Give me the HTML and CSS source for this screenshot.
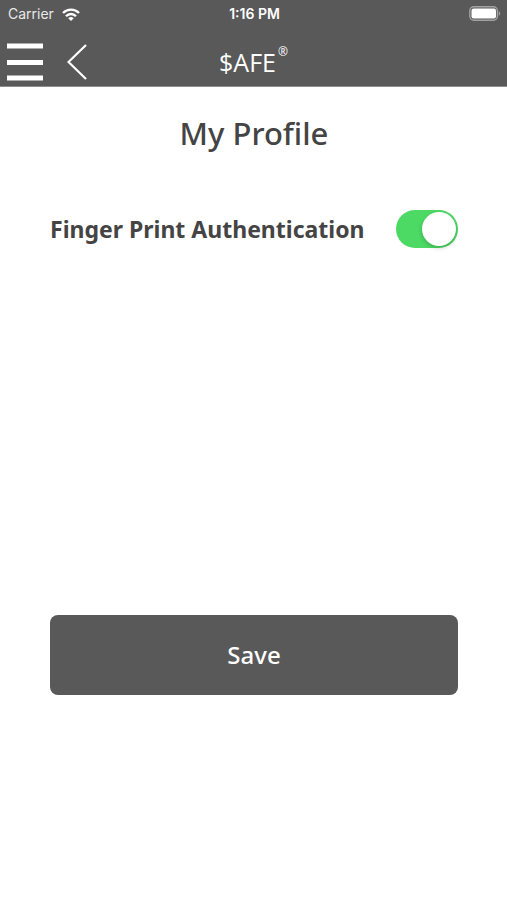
FILE: index.html
```html
<!DOCTYPE html>
<html lang="en">
<head>
<meta charset="utf-8">
<meta name="viewport" content="width=device-width, initial-scale=1">
<title>My Profile</title>
<link rel="stylesheet" href="styles.css">
</head>
<body>
<header class="header">
  <div class="status">
    <div class="status-left">
      <span>Carrier</span>
      <svg class="wifi" viewBox="0 0 18 13" aria-hidden="true">
        <g fill="none" stroke="#fff" stroke-width="2.400">
          <path d="M1 5 C5.500 0.500 12.500 0.500 17 5"/>
          <path d="M4 8.200 C6.800 5.200 11.200 5.200 14 8.200"/>
        </g>
        <path d="M6.200 10.200 Q9 7.800 11.800 10.200 L9 13Z" fill="#fff"/>
      </svg>
    </div>
    <time class="clock">1:16 PM</time>
    <svg class="battery" viewBox="0 0 32 15" aria-hidden="true">
      <rect x="0.800" y="0.800" width="27.600" height="13.400" rx="4" fill="none" stroke="#a3a3a3" stroke-width="1.400"/>
      <rect x="2.500" y="2.500" width="24.500" height="10" rx="2" fill="#fff"/>
      <path d="M29.800 5 Q32.600 7.500 29.800 10Z" fill="#a3a3a3"/>
    </svg>
  </div>
  <nav class="bar">
    <div class="actions">
      <button class="icon-button" type="button" aria-label="Menu">
        <svg class="menu" viewBox="0 0 36 38" aria-hidden="true">
          <path d="M0 3H36M0 19.500H36M0 35H36" fill="none" stroke="#fff" stroke-width="5"/>
        </svg>
      </button>
      <button class="icon-button" type="button" aria-label="Back">
        <svg class="back" viewBox="0 0 20 38" aria-hidden="true">
          <path d="M19 2L1.500 19L19 36" fill="none" stroke="#fff" stroke-width="2.200"/>
        </svg>
      </button>
    </div>
    <div class="brand">$AFE<sup class="mark">®</sup></div>
  </nav>
</header>
<main class="page">
  <h1 class="title">My Profile</h1>
  <form class="form">
    <div class="setting">
      <label class="setting-label" for="fingerprint">Finger Print Authentication</label>
      <input class="switch" id="fingerprint" type="checkbox" role="switch" checked>
    </div>
    <button class="save" type="button">Save</button>
  </form>
</main>
</body>
</html>
```
FILE: styles.css
```css
* {
  box-sizing: border-box;
}

body {
  margin: 0;
  background: #fff;
  color: #444;
  font-family: "Noto Sans", sans-serif;
}

button {
  border: 0;
  font-family: inherit;
}

svg {
  display: block;
}

.header {
  background: #595959;
  color: #fff;
  border-bottom: 1px solid #8c8c8c;
}

.status {
  display: grid;
  grid-template-columns: 1fr auto 1fr;
  align-items: center;
  height: 28px;
  padding: 0 6px 0 8px;
  font-family: Inter, sans-serif;
  font-size: 14px;
  line-height: 20px;
}

.status-left {
  display: flex;
  align-items: center;
  gap: 8px;
  color: #e8e8e8;
}

.wifi {
  width: 18px;
  height: 13px;
}

.clock {
  font-weight: 600;
}

.battery {
  width: 32px;
  height: 15px;
  margin-bottom: 2px;
  justify-self: end;
}

.bar {
  display: grid;
  grid-template-columns: 1fr auto 1fr;
  align-items: center;
  height: 58px;
  padding: 0 7px;
}

.actions {
  display: flex;
  gap: 24px;
  padding-top: 9px;
}

.icon-button {
  padding: 0;
  background: none;
}

.menu {
  width: 36px;
  height: 38px;
}

.back {
  width: 20px;
  height: 38px;
}

.brand {
  display: flex;
  gap: 2px;
  padding-top: 9px;
  font-family: "Open Sans", "Noto Sans", sans-serif;
  font-size: 25px;
  line-height: 36px;
}

.mark {
  font-size: 12px;
  line-height: 16px;
}

.page {
  padding: 22px 49px 24px 50px;
}

.title {
  margin: 0;
  font-size: 31px;
  font-weight: 500;
  line-height: 48px;
  text-align: center;
}

.form {
  padding-top: 48px;
}

.setting {
  display: flex;
  align-items: center;
  justify-content: space-between;
  min-height: 48px;
}

.setting-label {
  font-size: 23px;
  font-weight: 700;
  line-height: 32px;
}

.switch {
  appearance: none;
  display: flex;
  flex: none;
  width: 62px;
  height: 38px;
  margin: 0;
  padding: 2px;
  border-radius: 19px;
  background: #d8d8d8;
}

.switch::before {
  content: "";
  width: 34px;
  height: 34px;
  border-radius: 50%;
  background: #fff;
  box-shadow: 0 2px 4px rgba(0, 0, 0, 0.2);
}

.switch:checked {
  justify-content: flex-end;
  background: #4cd964;
}

.save {
  display: block;
  width: 100%;
  height: 80px;
  margin-top: 362px;
  border-radius: 8px;
  background: #595959;
  color: #fff;
  font-size: 24px;
  font-weight: 500;
  line-height: 32px;
}
```
